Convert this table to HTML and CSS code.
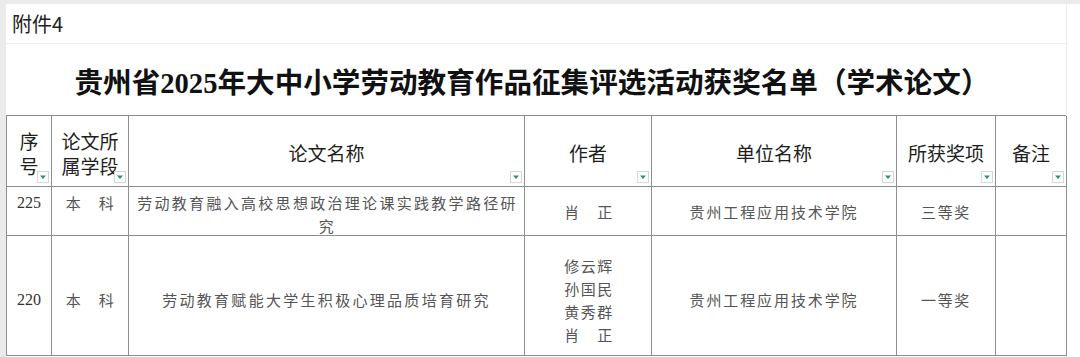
FILE: index.html
```html
<!DOCTYPE html>
<html lang="zh-CN">
<head>
<meta charset="utf-8">
<title>附件4</title>
<link rel="stylesheet" href="styles.css">
</head>
<body>
<div class="topbar"></div>
<div class="sheet">
  <div class="rowhead"></div>
  <div class="content">
    <div class="note">附件4</div>
    <div class="title">贵州省2025年大中小学劳动教育作品征集评选活动获奖名单（学术论文）</div>
    <div class="grid">
      <div class="th"><span>序<br>号</span><i class="filter"><svg viewBox="0 0 8 8" width="8" height="8"><path d="M1 2.5 L7 2.5 L4 6 Z"/></svg></i></div>
      <div class="th"><span>论文所<br>属学段</span><i class="filter"><svg viewBox="0 0 8 8" width="8" height="8"><path d="M1 2.5 L7 2.5 L4 6 Z"/></svg></i></div>
      <div class="th"><span>论文名称</span><i class="filter"><svg viewBox="0 0 8 8" width="8" height="8"><path d="M1 2.5 L7 2.5 L4 6 Z"/></svg></i></div>
      <div class="th"><span>作者</span><i class="filter"><svg viewBox="0 0 8 8" width="8" height="8"><path d="M1 2.5 L7 2.5 L4 6 Z"/></svg></i></div>
      <div class="th"><span>单位名称</span><i class="filter"><svg viewBox="0 0 8 8" width="8" height="8"><path d="M1 2.5 L7 2.5 L4 6 Z"/></svg></i></div>
      <div class="th"><span>所获奖项</span><i class="filter"><svg viewBox="0 0 8 8" width="8" height="8"><path d="M1 2.5 L7 2.5 L4 6 Z"/></svg></i></div>
      <div class="th"><span>备注</span><i class="filter"><svg viewBox="0 0 8 8" width="8" height="8"><path d="M1 2.5 L7 2.5 L4 6 Z"/></svg></i></div>

      <div class="td r1 top num">225</div>
      <div class="td r1 top stage">本　科</div>
      <div class="td r1 top paper1">劳动教育融入高校思想政治理论课实践教学路径研<br>究</div>
      <div class="td r1 author">肖　正</div>
      <div class="td r1 unit">贵州工程应用技术学院</div>
      <div class="td r1 award">三等奖</div>
      <div class="td r1"></div>

      <div class="td r2 num">220</div>
      <div class="td r2 stage">本　科</div>
      <div class="td r2 paper2">劳动教育赋能大学生积极心理品质培育研究</div>
      <div class="td r2 author authors">修云辉<br>孙国民<br>黄秀群<br>肖　正</div>
      <div class="td r2 unit">贵州工程应用技术学院</div>
      <div class="td r2 award">一等奖</div>
      <div class="td r2"></div>
    </div>
  </div>
</div>
</body>
</html>
```

FILE: styles.css
```css
* { box-sizing: border-box; margin: 0; padding: 0; }

html, body {
  width: 1080px;
  height: 357px;
  overflow: hidden;
  background: #ffffff;
}

body {
  font-family: "Noto Sans CJK SC", "Liberation Sans", sans-serif;
  color: #222;
}

.topbar {
  height: 4px;
  background: #ebebeb;
}

.sheet {
  display: flex;
  height: 353px;
}

.rowhead {
  width: 6px;
  background: #ebebeb;
  flex: none;
}

.content {
  width: 1061px;
  flex: none;
  border-right: 1px solid #ececec;
  display: flex;
  flex-direction: column;
}

.note {
  height: 40px;
  border-bottom: 1px solid #efefef;
  padding-left: 6px;
  font-size: 20px;
  line-height: 40px;
  color: #222;
}

.title {
  height: 71px;
  display: flex;
  align-items: center;
  justify-content: center;
  padding-top: 2px;
  font-family: "Liberation Serif", "Noto Sans CJK SC", serif;
  font-weight: 700;
  font-size: 28.6px;
  color: #111;
  padding-right: 8px;
}

.grid {
  width: 1060px;
  display: grid;
  grid-template-columns: 45px 77px 396px 127px 245px 99px 71px;
  grid-template-rows: 71px 49px 120px;
  border-left: 1px solid #8e8e8e;
  border-top: 1px solid #8e8e8e;
}

.th, .td {
  border-right: 1px solid #8e8e8e;
  border-bottom: 1px solid #8e8e8e;
  display: flex;
  align-items: center;
  justify-content: center;
  text-align: center;
  white-space: nowrap;
}

.th {
  position: relative;
  font-size: 19px;
  line-height: 25px;
  color: #1e1e1e;
  padding-top: 3px;
}

.filter {
  position: absolute;
  right: 2px;
  bottom: 3px;
  width: 12px;
  height: 12px;
  background: #fff;
  border: 1px solid #d6d6d6;
  display: flex;
  align-items: center;
  justify-content: center;
}

.filter svg path {
  fill: #2f8f72;
}

.td {
  font-size: 15px;
  line-height: 23px;
  color: #555;
}

.td.top {
  align-items: flex-start;
  padding-top: 4px;
}

.r2 {
  padding-top: 8px;
}

.num {
  font-family: "Liberation Serif", serif;
  font-size: 16px;
  color: #333;
}

.stage {
  letter-spacing: 1.5px;
  padding-left: 1px;
}

.paper1 {
  letter-spacing: 2.3px;
  padding-left: 2px;
}

.paper2 {
  letter-spacing: 2.3px;
}

.author {
  letter-spacing: 1.5px;
  padding-left: 2px;
}

.authors {
  line-height: 23px;
}

.unit {
  letter-spacing: 1.9px;
}

.award {
  letter-spacing: 1.7px;
}
```
